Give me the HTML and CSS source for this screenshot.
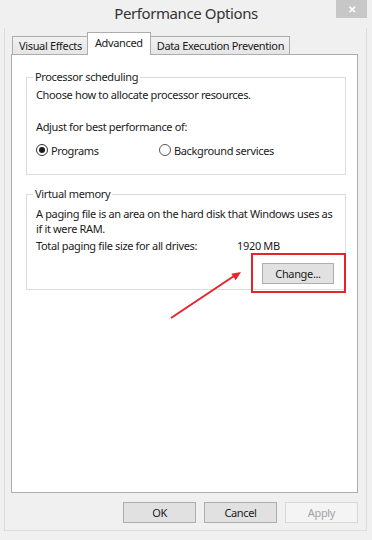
FILE: index.html
```html
<!DOCTYPE html>
<html lang="en">
<head>
    <meta charset="UTF-8">
    <title>Performance Options</title>
    <link rel="stylesheet" href="styles.css">
</head>
<body>
    <div class="window">
        <div class="titlebar">
            <span class="title">Performance Options</span>
            <span class="close">&#x2715;</span>
        </div>

        <div class="frame">
            <div class="tabs">
                <div class="tab">Visual Effects</div>
                <div class="tab active">Advanced</div>
                <div class="tab">Data Execution Prevention</div>
            </div>

            <div class="panel">
                <fieldset class="group">
                    <legend>Processor scheduling</legend>
                    <p>Choose how to allocate processor resources.</p>
                    <p class="gap">Adjust for best performance of:</p>
                    <div class="radios">
                        <label class="radio"><span class="dot checked"></span>Programs</label>
                        <label class="radio"><span class="dot"></span>Background services</label>
                    </div>
                </fieldset>

                <fieldset class="group vm">
                    <legend>Virtual memory</legend>
                    <p>A paging file is an area on the hard disk that Windows uses as<br>if it were RAM.</p>
                    <div class="total">
                        <span>Total paging file size for all drives:</span>
                        <span class="size">1920 MB</span>
                    </div>
                    <div class="change-row">
                        <span class="highlight"><button class="btn">Change...</button></span>
                    </div>
                </fieldset>
            </div>

            <div class="actions">
                <button class="btn">OK</button>
                <button class="btn">Cancel</button>
                <button class="btn disabled">Apply</button>
            </div>
        </div>

        <!-- annotation arrow -->
        <svg class="arrow" width="372" height="540" viewBox="0 0 372 540">
            <line x1="171" y1="318" x2="234" y2="276" stroke="#e8232a" stroke-width="2"/>
            <polygon points="241,272 235.7,280.3 231.3,273.7" fill="#e8232a"/>
        </svg>
    </div>
</body>
</html>
```

FILE: styles.css
```css
* {
    margin: 0;
    padding: 0;
    box-sizing: border-box;
}

body {
    font-family: "Noto Sans", "Open Sans", sans-serif;
    font-size: 11px;
    letter-spacing: -0.35px;
    color: #1b1b1b;
    background: #f0f0f0;
    width: 372px;
    height: 540px;
    overflow: hidden;
}

.window {
    position: relative;
    width: 372px;
    height: 540px;
}

.titlebar {
    position: relative;
    height: 28px;
    display: flex;
    align-items: center;
    justify-content: center;
}

.title {
    font-size: 15px;
    letter-spacing: -0.4px;
    color: #333;
    margin-top: -2px;
}

.close {
    position: absolute;
    top: 0;
    right: 5px;
    width: 31px;
    height: 18px;
    background: #c7c7c7;
    color: #fff;
    font-size: 10px;
    font-weight: bold;
    display: flex;
    align-items: center;
    justify-content: center;
}

.frame {
    margin: 0 5px 0 4px;
    height: 503px;
    border: 1px solid #dcdcdc;
    border-top: none;
    padding-top: 4px;
}

.tabs {
    display: flex;
    align-items: flex-end;
    margin-left: 7px;
    height: 22px;
    position: relative;
    z-index: 1;
}

.tab {
    height: 18px;
    padding: 0 5px 0 6px;
    border: 1px solid #acacac;
    border-bottom: none;
    background: linear-gradient(#f2f2f2, #e5e5e5);
    display: flex;
    align-items: center;
    line-height: 1;
}

.tab + .tab {
    margin-left: -1px;
}

.tab.active {
    height: 23px;
    margin-bottom: -1px;
    background: #fff;
    padding: 0 7px 3px;
}

.panel {
    margin-left: 6px;
    width: 347px;
    height: 439px;
    background: #fff;
    border: 1px solid #adadad;
    padding: 14px 11px 0 14px;
}

.group {
    border: 1px solid #dcdcdc;
    padding: 2px 9px 16px 9px;
    min-width: 0;
}

.group legend {
    padding: 0 2px;
    margin-left: -3px;
    line-height: 16px;
}

.group p {
    line-height: 16px;
}

.group p.gap {
    margin-top: 16px;
}

.radios {
    display: flex;
    margin-top: 7px;
    height: 16px;
}

.radio {
    display: flex;
    align-items: center;
    width: 123px;
}

.dot {
    width: 12px;
    height: 12px;
    border: 1px solid #333;
    border-radius: 50%;
    margin-right: 3px;
    background: #fff;
    display: flex;
    align-items: center;
    justify-content: center;
}

.radio + .radio .dot {
    border-color: #555;
}

.dot.checked::after {
    content: "";
    width: 6px;
    height: 6px;
    border-radius: 50%;
    background: #1b1b1b;
}

.vm {
    margin-top: 11px;
    padding-bottom: 5px;
}

.vm p {
    line-height: 15px;
    margin-top: 2px;
}

.total {
    display: flex;
    margin-top: 2px;
    line-height: 16px;
}

.size {
    margin-left: 40px;
}

.change-row {
    display: flex;
    justify-content: flex-end;
    margin-top: 9px;
    padding-right: 2px;
}

.highlight {
    position: relative;
    display: block;
}

.highlight::after {
    content: "";
    position: absolute;
    left: -11px;
    right: -12px;
    top: -10px;
    bottom: -9px;
    border: 2px solid #e8232a;
}

.btn {
    font-family: inherit;
    font-size: 11px;
    letter-spacing: inherit;
    color: #1b1b1b;
    width: 72px;
    height: 21px;
    background: #e1e1e1;
    border: 1px solid #adadad;
    display: block;
}

.actions {
    display: flex;
    justify-content: flex-end;
    gap: 8px;
    margin-top: 9px;
    padding-right: 8px;
}

.actions .btn {
    width: 73px;
}

.btn.disabled {
    background: #f4f4f4;
    border-color: #d9d9d9;
    color: #a3a3a3;
}

.arrow {
    position: absolute;
    left: 0;
    top: 0;
    pointer-events: none;
}
```
